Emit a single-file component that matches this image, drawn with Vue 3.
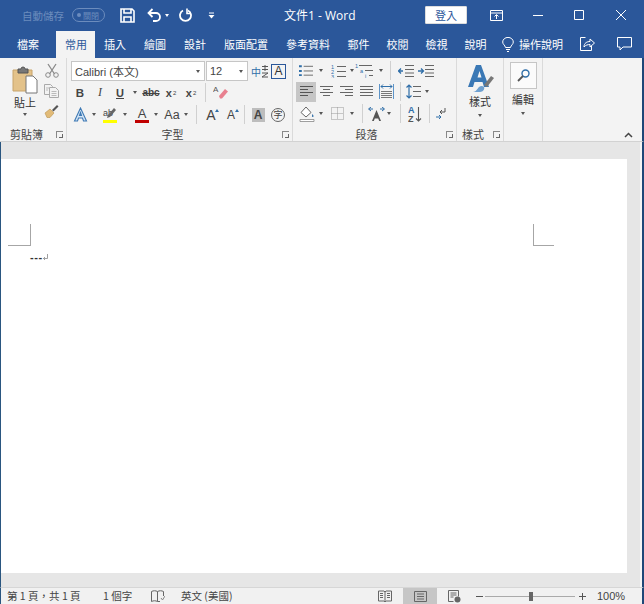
<template>
  <div class="window">
    <div class="title-bar">
      <span class="autosave">自動儲存</span>
      <span class="toggle"><i class="dot"></i>關閉</span>
      <svg class="qa save" width="15" height="15" viewBox="0 0 15 15"><path d="M1 1h11l2 2v11H1z M4 1v4h7V1 M4 14V9h7v5" fill="none" stroke="#fff" stroke-width="1.6"/></svg>
      <svg class="qa undo" width="15" height="14" viewBox="0 0 15 14"><path d="M2 5h7a4 4 0 0 1 0 8H6" fill="none" stroke="#fff" stroke-width="1.8"/><path d="M5.5 1 1.5 5l4 4" fill="none" stroke="#fff" stroke-width="1.8"/></svg>
      <i class="mini-arrow white"></i>
      <svg class="qa redo" width="14" height="14" viewBox="0 0 14 14"><path d="M4 2.500a5.500 5.500 0 1 0 5 0" fill="none" stroke="#fff" stroke-width="1.800"/><path d="M8 .5v5h4" fill="none" stroke="#fff" stroke-width="1.600"/></svg>
      <svg class="qa custom" width="7" height="7" viewBox="0 0 7 7"><path d="M1 1h5" stroke="#fff"/><path d="M.5 3h6L3.500 6.500z" fill="#fff"/></svg>
      <span class="doc-title">文件1 - Word</span>
      <button class="login">登入</button>
      <svg class="win display" width="13" height="11" viewBox="0 0 13 11"><path d="M.5.500h12v10H.5z M.5 3h12" fill="none" stroke="#fff"/><path d="M6.500 9V5M4.500 6.500l2-2 2 2" fill="none" stroke="#fff"/></svg>
      <svg class="win minimize" width="10" height="10" viewBox="0 0 10 10"><path d="M0 5.500h10" stroke="#fff"/></svg>
      <svg class="win maximize" width="10" height="10" viewBox="0 0 10 10"><path d="M.5.500h9v9h-9z" fill="none" stroke="#fff"/></svg>
      <svg class="win close" width="10" height="10" viewBox="0 0 10 10"><path d="M0 0l10 10M10 0 0 10" stroke="#fff"/></svg>
    </div>

    <div class="tabs">
      <span v-for="(tab, i) in tabs" :key="tab" class="tab" :class="{ active: tab === '常用', first: i === 0, tight: i > 6 }">{{ tab }}</span>
      <svg class="bulb" width="12" height="15" viewBox="0 0 12 15"><path d="M3.500 10.500C3 8 .7 7.500.7 5a5.300 4.600 0 0 1 10.600 0c0 2.500-2.300 3-2.800 5.500z M4 12.500h4M5 14.500h2" fill="none" stroke="#fff"/></svg>
      <span class="tell">操作說明</span>
      <svg class="share" width="15" height="14" viewBox="0 0 15 14"><path d="M5.500.5H.5v13h11V9" fill="none" stroke="#fff"/><path d="M4 10c0-4 3-5.500 6-5.500V2l4.500 4-4.500 4V7.500C8 7.500 5.500 8 4 10z" fill="none" stroke="#fff"/></svg>
      <svg class="comment" width="15" height="14" viewBox="0 0 15 14"><path d="M.5.500h14v9.500H6l-3 3v-3H.5z" fill="none" stroke="#fff"/></svg>
    </div>

    <div class="ribbon">
      <section class="group clip">
        <div class="group-body clip-body">
          <div class="paste">
            <svg width="26" height="28" viewBox="0 0 26 28">
              <path d="M1 4h19v21H1z" fill="#e3c28a" stroke="#c8a46a"/>
              <path d="M6 3h3a2 2 0 0 1 4 0h3v4H6z" fill="#777" stroke="#555"/>
              <path d="M14 10h7l4 4v13H14z" fill="#fff" stroke="#777"/>
            </svg>
            <span class="big-label">貼上</span>
            <i class="mini-arrow"></i>
          </div>
          <div class="clip-tools">
            <svg width="14" height="15" viewBox="0 0 14 15"><path d="M3 1l6.500 10M11 1 4.500 11" stroke="#8a8a8a" stroke-width="1.300" fill="none"/><circle cx="3" cy="12" r="2.300" fill="none" stroke="#8a8a8a"/><circle cx="11" cy="12" r="2.300" fill="none" stroke="#8a8a8a"/></svg>
            <svg width="15" height="14" viewBox="0 0 15 14"><path d="M.5.500h6l2 2v8h-8z" fill="#f3f3f3" stroke="#aaa"/><path d="M5.500 3.500h6l3 3v7h-9z" fill="#f3f3f3" stroke="#aaa"/><path d="M7.500 7.500h5M7.500 9.500h5M7.500 11.500h5M2 4h3M2 6h2" stroke="#bbb"/></svg>
            <svg width="15" height="14" viewBox="0 0 15 14"><path d="M8 6l5-5 1.500 1.500-5 5z" fill="#555"/><path d="M1 9l5-4 4 4-4 4.500H3z" fill="#e2bb78" stroke="#b8924f" stroke-width=".6"/></svg>
          </div>
        </div>
        <div class="group-foot">剪貼簿<i class="launcher"></i></div>
      </section>

      <section class="group font">
        <div class="group-body stack">
          <div class="row combos">
            <div class="combo font-name">Calibri (本文)<i class="mini-arrow"></i></div>
            <div class="combo font-size">12<i class="mini-arrow"></i></div>
            <span class="zh-icon"><b>中</b><svg width="8" height="13" viewBox="0 0 8 13"><path d="M1 1.500h6M1 4.500h6M4 0v6M1 8h6L1 12h6" fill="none" stroke="#555"/></svg></span>
            <span class="char-border">A</span>
          </div>
          <div class="row">
            <span class="cell bold">B</span>
            <span class="cell italic">I</span>
            <span class="cell under">U</span>
            <span class="arrow-cell w10"><i class="mini-arrow"></i></span>
            <span class="cell strike ml1">abc</span>
            <span class="cell script">x<sub>2</sub></span>
            <span class="cell script">x<sup>2</sup></span>
            <i class="sep s4"></i>
            <span class="cell ml4">
              <svg width="15" height="15" viewBox="0 0 15 15"><path d="M6 11 12 4l3 2.500-6 7H7z" fill="#e8808f"/><text x="0" y="7" font-size="8" fill="#555" font-family="Liberation Sans">A</text></svg>
            </span>
          </div>
          <div class="row">
            <span class="cell"><svg width="15" height="15" viewBox="0 0 15 15"><path d="M7.500 1 13.500 14h-3l-1-3h-4l-1 3h-3z M6.500 8.500h2L7.500 5.500z" fill="#d5e5f5" stroke="#3f7ab5" stroke-width="1.100" fill-rule="evenodd"/></svg></span>
            <span class="arrow-cell"><i class="mini-arrow"></i></span>
            <span class="cell ml2 hl">
              <span class="hl-text">ab</span>
              <svg class="pen" width="9" height="11" viewBox="0 0 9 11"><path d="M7 0l2 2-6 7-3 1 1-3z" fill="#666"/></svg>
              <i class="hl-bar yellow"></i>
            </span>
            <span class="arrow-cell ml1"><i class="mini-arrow"></i></span>
            <span class="cell ml3 hl"><span class="red-a">A</span><i class="hl-bar red"></i></span>
            <span class="arrow-cell"><i class="mini-arrow"></i></span>
            <span class="cell ml2 aa">Aa</span>
            <span class="arrow-cell"><i class="mini-arrow"></i></span>
            <i class="sep s6"></i>
            <span class="cell ml4 grow-a">A<i class="caret"></i></span>
            <span class="cell shrink-a">A<i class="caret"></i></span>
            <i class="sep s3"></i>
            <span class="cell ml3"><span class="shade-a">A</span></span>
            <span class="cell"><span class="circle">字</span></span>
          </div>
        </div>
        <div class="group-foot">字型<i class="launcher"></i></div>
      </section>

      <section class="group para">
        <div class="group-body stack">
          <div class="row">
            <span class="cell"><svg width="14" height="13" viewBox="0 0 15 13"><path d="M0 1h3v2H0zM0 6h3v2H0zM0 10.500h3v2H0z" fill="#2f6ea8"/><path d="M5 2h10M5 7h10M5 11.500h10" stroke="#666"/></svg></span>
            <span class="arrow-cell w10"><i class="mini-arrow"></i></span>
            <span class="cell ml2"><svg width="15" height="14" viewBox="0 0 15 14"><text x="0" y="5" class="tiny" fill="#2f6ea8">1</text><text x="0" y="10" class="tiny" fill="#2f6ea8">2</text><text x="0" y="14.500" class="tiny" fill="#2f6ea8">3</text><path d="M6 2.500h9M6 7.500h9M6 12.500h9" stroke="#666"/></svg></span>
            <span class="arrow-cell"><i class="mini-arrow"></i></span>
            <span class="cell narrow"><svg width="19" height="15" viewBox="0 0 19 15"><text x="0" y="5" class="tiny" fill="#2f6ea8">1</text><text x="5" y="10" class="tiny" fill="#2f6ea8">a</text><text x="10" y="15" class="tiny" fill="#2f6ea8">i</text><path d="M4 2.500h13M10 7.500h8M14 12.500h4" stroke="#666"/></svg></span>
            <span class="arrow-cell ml3"><i class="mini-arrow"></i></span>
            <i class="sep s5"></i>
            <span class="cell ml5"><svg width="16" height="12" viewBox="0 0 16 12"><path d="M7 .5h9M7 4.500h9M7 8h9M7 11.500h9" stroke="#666"/><path d="M5 6H1M3 3.500.5 6 3 8.500" fill="none" stroke="#2f6ea8" stroke-width="1.300"/></svg></span>
            <span class="cell"><svg width="16" height="12" viewBox="0 0 16 12"><path d="M7 .5h9M7 4.500h9M7 8h9M7 11.500h9" stroke="#666"/><path d="M0 6h5M3 3.500 5.500 6 3 8.500" fill="none" stroke="#2f6ea8" stroke-width="1.300"/></svg></span>
          </div>
          <div class="row">
            <span class="cell pressed"><svg width="13" height="11" viewBox="0 0 13 11"><path d="M0 .5h13M0 3.500h8M0 6.500h13M0 9.500h8" stroke="#555"/></svg></span>
            <span class="cell"><svg width="13" height="11" viewBox="0 0 13 11"><path d="M0 .5h13M3 3.500h7M0 6.500h13M3 9.500h7" stroke="#666"/></svg></span>
            <span class="cell"><svg width="13" height="11" viewBox="0 0 13 11"><path d="M0 .5h13M5 3.500h8M0 6.500h13M5 9.500h8" stroke="#666"/></svg></span>
            <span class="cell"><svg width="13" height="11" viewBox="0 0 13 11"><path d="M0 .5h13M0 3.500h13M0 6.500h13M0 9.500h13" stroke="#666"/></svg></span>
            <span class="cell"><svg width="15" height="15" viewBox="0 0 15 15"><path d="M.5 0v15M14.500 0v15" stroke="#5d94c8"/><path d="M2 2.500h11M4 .5 2 2.500l2 2M11 .5l2 2-2 2" fill="none" stroke="#2f6ea8"/><path d="M2 7.500h11M2 9.500h11M2 11.500h11M2 13.500h11" stroke="#777"/></svg></span>
            <i class="sep s4"></i>
            <span class="cell ml2"><svg width="15" height="15" viewBox="0 0 15 15"><path d="M3 1v13M.5 3.500 3 1l2.500 2.500M.5 11.500 3 14l2.500-2.500" fill="none" stroke="#2f6ea8" stroke-width="1.200"/><path d="M7 2.500h8M7 7.500h8M7 12.500h8" stroke="#666"/></svg></span>
            <span class="arrow-cell"><i class="mini-arrow"></i></span>
          </div>
          <div class="row">
            <span class="cell ml1"><svg width="16" height="16" viewBox="0 0 16 16"><path d="M7 1 12 6.500 7 11 2 6.500z" fill="#fff" stroke="#666"/><path d="M13.500 8c1 1.500 1.500 2.500.5 3s-1.500-1-.5-3z" fill="#2f6ea8"/><path d="M1 13.500h14v2H1z" fill="#fff" stroke="#888" stroke-width=".8"/></svg></span>
            <span class="arrow-cell"><i class="mini-arrow"></i></span>
            <span class="cell ml2"><svg width="13" height="13" viewBox="0 0 13 13"><path d="M.5.500h12v12H.5z M6.500.5v12 M.5 6.500h12" fill="none" stroke="#999" stroke-dasharray="1 1"/></svg></span>
            <span class="arrow-cell ml1"><i class="mini-arrow"></i></span>
            <i class="sep s6"></i>
            <span class="cell ml3"><svg width="17" height="14" viewBox="0 0 17 14"><path d="M8.500 3 13 14h-1.800l-1-2.500H6.800L5.800 14H4z" fill="#555"/><path d="M5 2H1M3 0 .5 2 3 4M12 2h4M14 0l2.500 2L14 4" fill="none" stroke="#2f6ea8"/></svg></span>
            <span class="arrow-cell neg"><i class="mini-arrow"></i></span>
            <i class="sep s7"></i>
            <span class="cell ml4"><svg width="14" height="16" viewBox="0 0 14 16"><text x="0" y="7" class="sort" fill="#2f6ea8">A</text><text x="0" y="15.500" class="sort" fill="#555">Z</text><path d="M10.500 1v14M8 12.500l2.500 2.500 2.500-2.500" fill="none" stroke="#555" stroke-width="1.100"/></svg></span>
            <i class="sep s4"></i>
            <span class="cell ml2"><svg width="12" height="12" viewBox="0 0 12 12"><path d="M9 0v4H4M6 2 4 4l2 2" fill="none" stroke="#555"/><path d="M0 9h5M3 7l2 2-2 2" fill="none" stroke="#2f6ea8"/></svg></span>
          </div>
        </div>
        <div class="group-foot">段落<i class="launcher"></i></div>
      </section>

      <section class="group styles">
        <div class="group-body big">
          <svg width="27" height="28" viewBox="0 0 27 28">
            <path d="M9 0h5l8 22h-5l-1.500-5h-8L6 22H1zM10.500 12.500h4L12.500 6z" fill="#3a78b5" fill-rule="evenodd"/>
            <path d="M17 20l7-9 3 2-7 9z" fill="#777"/>
            <path d="M6 27c3 0 4-3 6-5 2-1.500 4-1 5 0 1 2-1 5-4 5z" fill="#6ea0d0"/>
          </svg>
          <span class="big-label">樣式</span>
          <i class="mini-arrow"></i>
        </div>
        <div class="group-foot">樣式<i class="launcher"></i></div>
      </section>

      <section class="group edit">
        <div class="group-body big">
          <span class="find-box">
            <svg width="13" height="13" viewBox="0 0 13 13"><circle cx="8.500" cy="4.500" r="3.500" fill="none" stroke="#2f6ea8" stroke-width="1.400"/><path d="M6 7 1 12" stroke="#555" stroke-width="1.800"/></svg>
          </span>
          <span class="big-label">編輯</span>
          <i class="mini-arrow"></i>
        </div>
      </section>

      <div class="collapse">
        <svg width="9" height="6" viewBox="0 0 9 6"><path d="M1 5l3.500-3.500L8 5" fill="none" stroke="#444" stroke-width="1.500"/></svg>
      </div>
    </div>

    <div class="workspace">
      <div class="page">
        <div class="crops">
          <i class="crop left"></i>
          <i class="crop right"></i>
        </div>
        <div class="doc-text">---<svg width="5" height="7" viewBox="0 0 5 7"><path d="M4.500 0v4.500H.5M2 3 .5 4.500 2 6" fill="none" stroke="#888" stroke-width=".8"/></svg></div>
      </div>
    </div>

    <div class="status">
      <span class="st pages">第 1 頁，共 1 頁</span>
      <span class="st words">1 個字</span>
      <svg class="proof" width="14" height="12" viewBox="0 0 14 12"><path d="M.5 1.500c2-1 4-1 6 0v10c-2-1-4-1-6 0zM6.500 1.500c2-1 4-1 6 0V6M6.500 11.500H9" fill="none" stroke="#666"/><path d="M10 8l1.500 2L14 6" fill="none" stroke="#888"/></svg>
      <span class="st lang">英文 (美國)</span>
      <svg class="read" width="14" height="12" viewBox="0 0 14 12"><path d="M.5 1h5.500l1 1 1-1h5.500v10H8l-1 1-1-1H.5zM7 2v9M2 3.500h3M2 5.500h3M2 7.500h3M9 3.500h3M9 5.500h3M9 7.500h3" fill="none" stroke="#666"/></svg>
      <span class="layout-btn"><svg width="13" height="11" viewBox="0 0 13 11"><path d="M.5.500h12v10H.5zM3 3h7M3 5.500h7M3 8h7" fill="none" stroke="#666"/></svg></span>
      <svg class="web" width="13" height="13" viewBox="0 0 13 13"><path d="M.5.500h10v6M.5.500v11h5M2.500 3h6M2.500 5h6M2.500 7h3" fill="none" stroke="#666"/><circle cx="9.500" cy="9.500" r="3" fill="#666"/></svg>
      <span class="zoom-sign minus"></span>
      <span class="slider"><i class="thumb"></i></span>
      <span class="zoom-sign plus"></span>
      <span class="st percent">100%</span>
    </div>
  </div>
</template>

<script setup>
const tabs = ['檔案', '常用', '插入', '繪圖', '設計', '版面配置', '參考資料', '郵件', '校閱', '檢視', '說明']
</script>

<style>
html, body { margin: 0; background: #fff; }
</style>

<style scoped>
.window {
  width: 644px;
  height: 604px;
  display: flex;
  flex-direction: column;
  overflow: hidden;
  font-family: "Noto Sans CJK TC", "Liberation Sans", sans-serif;
  font-size: 11px;
  color: #444;
  background: #e6e6e6;
}

i { display: block; font-style: normal; }

.title-bar {
  height: 30px;
  flex: none;
  display: flex;
  align-items: center;
  background: #2b579a;
  color: #fff;
}
.autosave { margin-left: 22px; width: 44px; color: #6c8cbd; font-size: 10.500px; }
.toggle {
  margin-left: 6px;
  width: 33px;
  height: 14px;
  box-sizing: border-box;
  border: 1px solid #6c8cbd;
  border-radius: 7px;
  display: flex;
  align-items: center;
  gap: 2px;
  padding-left: 4px;
  color: #6c8cbd;
  font-size: 8px;
}
.dot { width: 4px; height: 4px; border-radius: 50%; background: #6c8cbd; }
.save { margin-left: 15px; }
.undo { margin-left: 12px; }
.redo { margin-left: 10px; }
.custom { margin-left: 15px; }
.title-bar .mini-arrow { margin-left: 3px; }
.mini-arrow.white { border-top-color: #fff; }
.doc-title { margin-left: 69px; width: 73px; font-size: 12px; white-space: nowrap; font-family: "Open Sans", "Noto Sans CJK TC", sans-serif; }
.login {
  margin-left: 68px;
  width: 42px;
  height: 18px;
  padding: 0;
  border: 1px solid #ddd;
  border-radius: 1px;
  background: #fff;
  color: #2b579a;
  font: inherit;
  font-size: 11px;
  line-height: 14px;
}
.display { margin-left: 23px; }
.minimize { margin-left: 30px; }
.maximize { margin-left: 31px; }
.close { margin-left: 32px; }

.tabs {
  height: 28px;
  flex: none;
  display: flex;
  align-items: stretch;
  padding-left: 8px;
  background: #2b579a;
  color: #fff;
  line-height: 28px;
}
.tab { padding: 0 9px; white-space: nowrap; }
.tab.tight { padding: 0 8.500px; }
.tab.first { margin-right: 8px; }
.tab.active {
  width: 39px;
  box-sizing: border-box;
  margin-top: 1px;
  line-height: 27px;
  background: #f3f3f3;
  color: #2b579a;
}
.bulb { align-self: center; margin-left: 7px; }
.tell { margin-left: 5px; white-space: nowrap; }
.share { align-self: center; margin-left: 17px; }
.comment { align-self: center; margin-left: 22px; }

.ribbon {
  height: 84px;
  flex: none;
  display: flex;
  background: #f3f3f3;
  border-bottom: 1px solid #d2d2d2;
  border-right: 2px solid #1f4778;
  box-sizing: border-box;
}
.group {
  box-sizing: border-box;
  display: flex;
  flex-direction: column;
  border-right: 1px solid #dadada;
  position: relative;
}
.group-body { height: 68px; }
.group-foot {
  height: 15px;
  line-height: 16px;
  text-align: center;
  position: relative;
  color: #444;
}
.launcher {
  position: absolute;
  right: 3px;
  top: 5px;
  width: 6px;
  height: 6px;
  border-left: 1px solid #888;
  border-top: 1px solid #888;
}
.launcher::after {
  content: "";
  display: block;
  width: 3px;
  height: 3px;
  margin: 2px 0 0 2px;
  border-right: 1px solid #666;
  border-bottom: 1px solid #666;
}

.clip { width: 67px; }
.clip-body { display: flex; padding: 8px 0 0 12px; box-sizing: border-box; }
.clip .group-foot { text-align: left; padding-left: 10px; }
.paste { width: 26px; display: flex; flex-direction: column; align-items: center; }
.big-label { font-size: 11px; line-height: 14px; margin-top: 1px; color: #333; }
.paste .mini-arrow { margin-top: 4px; }
.big .mini-arrow { margin-top: 6px; }
.clip-tools { margin-left: 6px; display: flex; flex-direction: column; align-items: center; gap: 6px; margin-top: -3px; }

.font { width: 226px; }
.font .group-foot { padding-right: 14px; }
.para { width: 164px; }
.para .group-foot { padding-right: 16px; }
.stack { padding: 2px 0 0 3px; display: flex; flex-direction: column; box-sizing: border-box; }
.row { height: 21px; display: flex; align-items: center; }
.row.combos { height: 22px; }
.row + .row + .row { margin-top: 1px; }
.combo {
  height: 20px;
  box-sizing: border-box;
  display: flex;
  align-items: center;
  justify-content: space-between;
  padding: 0 4px 0 3px;
  background: #fff;
  border: 1px solid #c6c6c6;
  font-size: 11px;
  color: #444;
  white-space: nowrap;
}
.font-name { width: 134px; margin-left: 1px; font-family: "Liberation Sans", "Noto Sans CJK TC", sans-serif; }
.font-size { width: 42px; font-family: "Liberation Sans", sans-serif; margin-left: 1px; }
.zh-icon { margin-left: 3px; width: 18px; display: flex; align-items: center; font-size: 10px; }
.zh-icon b { font-weight: 400; color: #2f6ea8; }
.char-border {
  margin-left: 2px;
  width: 15px;
  height: 15px;
  box-sizing: border-box;
  border: 1px solid #2b579a;
  text-align: center;
  font: 12px/13px "Liberation Sans", sans-serif;
  color: #333;
}

.cell {
  width: 20px;
  height: 20px;
  flex: none;
  position: relative;
  display: flex;
  align-items: center;
  justify-content: center;
  font-family: "Liberation Sans", sans-serif;
  color: #444;
}
.cell.narrow { margin-left: -2px; }
.arrow-cell { width: 8px; flex: none; display: flex; justify-content: center; }
.arrow-cell.w10 { width: 10px; }
.arrow-cell.neg { margin-left: -1px; }
.mini-arrow { width: 0; height: 0; border: 2.500px solid transparent; border-top: 3px solid #555; border-bottom: 0; flex: none; }

.sep { width: 1px; height: 19px; background: #d0d0d0; flex: none; }
.s3 { margin-left: 3px; }
.s4 { margin-left: 4px; }
.s5 { margin-left: 5px; }
.s6 { margin-left: 6px; }
.s7 { margin-left: 7px; }
.ml1 { margin-left: 1px; }
.ml2 { margin-left: 2px; }
.ml3 { margin-left: 3px; }
.ml4 { margin-left: 4px; }
.ml5 { margin-left: 5px; }

.bold { font-weight: 700; font-size: 11.500px; }
.italic { font: italic 12px "Liberation Serif", serif; }
.under { font-weight: 700; font-size: 11px; text-decoration: underline; }
.strike { font-size: 10px; font-weight: 700; text-decoration: line-through; }
.script { font-weight: 700; font-size: 11px; }
.script sub, .script sup { font-size: 6px; font-weight: 400; margin-left: 1px; }

.hl { flex-direction: column; }
.hl-text { font-size: 9px; line-height: 9px; margin: -3px 4px 0 0; }
.pen { position: absolute; right: 4px; top: 3px; }
.hl-bar { position: absolute; left: 3px; bottom: 2px; width: 14px; height: 3px; }
.yellow { background: #ffff00; }
.red { background: #c00000; }
.red-a { font-size: 13px; line-height: 13px; margin-top: -3px; }
.aa { font-size: 12.500px; }
.grow-a { font-size: 14px; }
.shrink-a { font-size: 12px; }
.caret {
  position: absolute;
  right: 2px;
  top: 4px;
  width: 0;
  height: 0;
  border: 2.500px solid transparent;
  border-top: 0;
  border-bottom: 3px solid #2f6ea8;
}
.shade-a {
  width: 13px;
  height: 14px;
  background: #bdbdbd;
  text-align: center;
  font: 700 12px/14px "Liberation Sans", sans-serif;
}
.circle {
  width: 14px;
  height: 14px;
  box-sizing: border-box;
  border: 1px solid #666;
  border-radius: 50%;
  text-align: center;
  font: 9px/12px "Noto Sans CJK TC", sans-serif;
}
.pressed { background: #c6c6c6; }
.tiny { font: 5.500px "Liberation Sans", sans-serif; }
.sort { font: 700 9px "Liberation Sans", sans-serif; }

.styles { width: 47px; }
.edit { width: 39px; }
.big { display: flex; flex-direction: column; align-items: center; padding-top: 7px; box-sizing: border-box; }
.styles .group-foot { text-align: left; padding-left: 5px; }
.edit .big { padding-top: 4px; }
.find-box {
  width: 27px;
  height: 27px;
  box-sizing: border-box;
  border: 1px solid #c6c6c6;
  background: #fbfbfb;
  display: flex;
  align-items: center;
  justify-content: center;
}
.edit .big-label { margin-top: 3px; }

.collapse { flex: 1; display: flex; justify-content: flex-end; align-items: flex-end; padding: 0 9px 3px 0; }

.workspace {
  flex: 1;
  min-height: 0;
  box-sizing: border-box;
  padding: 17px 15px 14px 1px;
  background: #e6e6e6;
  border-left: 1px solid #2a5680;
  border-right: 2px solid #1f4778;
  box-shadow: inset -2px 0 #f4f4f4;
}
.page { height: 100%; background: #fff; box-sizing: border-box; padding-top: 65px; margin-left: -1px; }
.crops { display: flex; padding: 0 0 0 7px; }
.crop { width: 22px; height: 21px; border-bottom: 1px solid #a6a6a6; box-sizing: content-box; }
.crop.left { border-right: 1px solid #a6a6a6; }
.crop.right { width: 20px; margin-left: 502px; border-left: 1px solid #a6a6a6; }
.doc-text {
  margin: 5px 0 0 29px;
  font: 700 11px/13px "Liberation Sans", sans-serif;
  color: #333;
  display: flex;
  align-items: center;
  letter-spacing: .6px;
}

.status {
  height: 17px;
  flex: none;
  display: flex;
  align-items: center;
  background: #f1f1f1;
  border-top: 1px solid #d6d6d6;
  box-sizing: border-box;
  border-left: 1px solid #2a5680;
  border-right: 2px solid #1f4778;
}
.st { white-space: nowrap; line-height: 16px; }
.pages { margin-left: 6px; width: 78px; font-size: 10.500px; }
.words { margin-left: 18px; width: 33px; font-size: 10.500px; }
.proof { margin-left: 15px; }
.lang { margin-left: 16px; width: 55px; font-size: 10.500px; }
.read { margin-left: 142px; }
.layout-btn {
  margin-left: 11px;
  width: 34px;
  height: 16px;
  background: #c6c6c6;
  display: flex;
  align-items: center;
  justify-content: center;
}
.web { margin-left: 11px; }
.zoom-sign { position: relative; width: 7px; height: 1px; background: #555; margin-left: 15px; }
.zoom-sign.plus::after { content: ""; position: absolute; left: 3px; top: -3px; width: 1px; height: 7px; background: #555; }
.slider { position: relative; width: 90px; height: 1px; background: #aaa; margin-left: 2px; }
.thumb { position: absolute; left: 44px; top: -4px; width: 4px; height: 9px; background: #666; }
.slider + .zoom-sign { margin-left: 4px; }
.percent { margin-left: 11px; font-family: "Liberation Sans", sans-serif; font-size: 11px; }
</style>
